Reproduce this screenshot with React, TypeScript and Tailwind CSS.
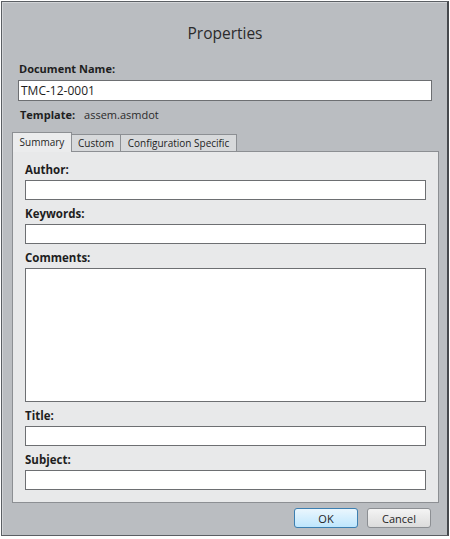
const FONT = { fontFamily: '"Open Sans", "Noto Sans", sans-serif' }

function Field({ label, tall }: { label: string; tall?: boolean }) {
  return (
    <div className="flex flex-col">
      <label className="h-[16px] text-[11.5px] leading-[16px] font-bold text-[#1e1e1e]">{label}</label>
      <div className={'mt-[2px] border border-[#6d6f72] bg-white ' + (tall ? 'h-[134px]' : 'h-[20px]')} />
    </div>
  )
}

const TABS = [
  { label: 'Summary', w: 'w-[60px]' },
  { label: 'Custom', w: 'w-[49px]' },
  { label: 'Configuration Specific', w: 'w-[116px]' },
]

export default function App() {
  return (
    <div className="w-[450px] h-[539px] bg-white" style={FONT}>
      <div className="ml-[1px] mt-[1px] w-[448px] h-[535px] border border-[#5b5f64] border-r-2 border-r-[#45484c] bg-[#babdc1] flex flex-col">
        <div className="flex-1 flex flex-col border-l border-t border-[#d2d4d7]">
          <h1 className="mt-[19px] h-[22px] text-center text-[15.5px] leading-[22px] text-[#2b2b2b]">
            Properties
          </h1>

          <div className="mt-[17px] pl-[15px] pr-[15px]">
            <div className="h-[15px] pl-[1px] text-[11px] leading-[15px] font-bold text-[#1e1e1e]">Document Name:</div>
            <div className="mt-[4px] h-[21px] border border-[#6d6f72] bg-white flex items-center px-[2px] text-[12px] text-[#1e1e1e]">
              TMC-12-0001
            </div>
            <div className="mt-[7px] flex items-center gap-[9px] h-[15px] pl-[2px]">
              <span className="text-[11px] font-bold text-[#1e1e1e]">Template:</span>
              <span className="text-[11px] text-[#2b2b2b]">assem.asmdot</span>
            </div>
          </div>

          <div className="mt-[9px] pl-[9px] pr-[8px]">
            <div className="flex items-end h-[19px]">
              {TABS.map((t, i) => (
                <div
                  key={t.label}
                  className={
                    t.w +
                    (i === 0
                      ? ' h-[20px] flex items-center justify-center border border-b-0 border-[#8c8f93] bg-[#ebeced] text-[10px] text-[#1e1e1e] relative z-10 -mb-[1px]'
                      : ' h-[17px] flex items-center justify-center border border-l-0 border-b-0 border-[#8c8f93] bg-[#d7d9db] text-[10px] text-[#1e1e1e]')
                  }
                >
                  {t.label}
                </div>
              ))}
            </div>
            <div className="h-[352px] border border-[#8c8f93] bg-[#e8e9ea] px-[12px] pt-[10px] flex flex-col gap-[6px]">
              <Field label="Author:" />
              <Field label="Keywords:" />
              <Field label="Comments:" tall />
              <Field label="Title:" />
              <Field label="Subject:" />
            </div>
          </div>

          <div className="mt-[5px] flex justify-end gap-[9px] pr-[16px]">
            <button className="w-[64px] h-[20px] rounded-[3px] border border-[#3c7fb1] bg-gradient-to-b from-[#eaf6fd] to-[#bee6fd] text-[11px] text-[#1e1e1e] leading-none">
              OK
            </button>
            <button className="w-[64px] h-[20px] rounded-[3px] border border-[#8c8f93] bg-gradient-to-b from-[#f4f4f4] to-[#dcdcdc] text-[11px] text-[#1e1e1e] leading-none">
              Cancel
            </button>
          </div>
        </div>
      </div>
    </div>
  )
}
